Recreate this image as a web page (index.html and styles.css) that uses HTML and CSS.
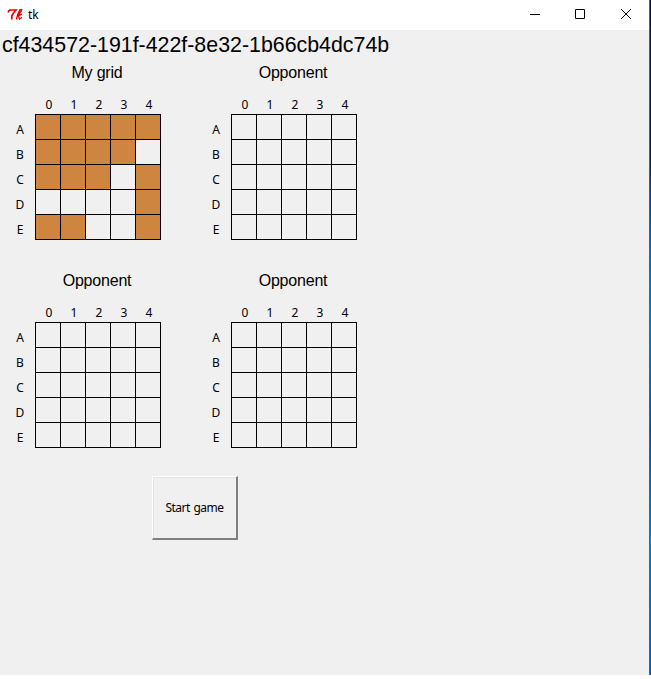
FILE: index.html
```html
<!DOCTYPE html>
<html lang="en">
<head>
<meta charset="utf-8">
<title>tk</title>
<link rel="stylesheet" href="styles.css">
</head>
<body>
<div class="desktop">
<main class="window">
  <header class="titlebar">
    <svg class="logo" width="16" height="16" viewBox="0 0 16 16" fill="none" stroke="#f00000"><path stroke-width="1.7" d="M1.5 5.5V4L3 3H9L6.5 6L4.8 9V12.5"/><path stroke-width="1.4" d="M9.5 12.5L10.5 8L13 2.8H14.5L14 4.5L10.5 9M14.8 6.8L11.5 8.8L12.5 12L15 10.5"/></svg>
    <span class="caption">tk</span>
    <div class="controls">
      <svg width="45" height="29" viewBox="0 0 45 29" stroke="#000" fill="none"><path d="M17 14.5h10"/></svg>
      <svg width="45" height="29" viewBox="0 0 45 29" stroke="#000" fill="none"><path d="M17.5 9.5h9v9h-9z"/></svg>
      <svg width="45" height="29" viewBox="0 0 45 29" stroke="#000" fill="none"><path d="M18 9l10 10M28 9l-10 10"/></svg>
    </div>
  </header>
  <h1 class="game-id">cf434572-191f-422f-8e32-1b66cb4dc74b</h1>
  <div class="boards" id="boards"></div>
  <button class="start">Start game</button>
</main>
<div class="edge"></div>
</div>
<script src="boards.js"></script>
</body>
</html>
```
FILE: boards.js
```js
const boards = [
  { name: 'My grid', cells: ['11111', '11110', '11101', '00001', '11001'] },
  { name: 'Opponent' },
  { name: 'Opponent' },
  { name: 'Opponent' }
];
const empty = Array(5).fill('00000');

document.getElementById('boards').innerHTML = boards.map(({ name, cells = empty }) => `
  <section class="board">
    <h2>${name}</h2>
    <div class="columns">${[0, 1, 2, 3, 4].map(n => `<span>${n}</span>`).join('')}</div>
    <div class="field">
      <div class="rows">${[...'ABCDE'].map(c => `<span>${c}</span>`).join('')}</div>
      <div class="cells">${cells.join('').split('').map(v => `<i class="${v === '1' ? 'ship' : 'sea'}"></i>`).join('')}</div>
    </div>
  </section>`).join('');
```
FILE: styles.css
```css
* { box-sizing: border-box; }
body {
  margin: 0;
  background: #fff;
  color: #000;
  font: 12px/16px "Noto Sans", sans-serif;
}
.desktop { display: flex; height: 675px; }
.window { width: 649px; background: #f0f0f0; }
.edge {
  width: 2px;
  border-left: 1px solid #0078d7;
  background: linear-gradient(#001a40 0, #002050 150px, #0070c8 260px, #0080d8 330px, #004e98 430px, #0080d8 540px, #0058b0 100%);
}
.titlebar {
  display: flex;
  align-items: center;
  height: 30px;
  padding: 0 1px 0 7px;
  background: #fff;
}
.logo { display: block; }
.caption { margin-left: 5px; }
.controls { display: flex; margin-left: auto; height: 30px; }
.game-id {
  margin: 0;
  padding: 2px 0 0 2px;
  height: 31px;
  font: 21.36px/26px "Liberation Sans", Arial, sans-serif;
}
.boards {
  display: grid;
  grid-template-columns: 196px 196px;
  grid-auto-rows: 208px;
}
.board { width: 196px; }
.board h2 {
  margin: 0;
  padding-right: 2px;
  height: 36px;
  text-align: center;
  font: 16px/23px "Liberation Sans", Arial, sans-serif;
  letter-spacing: -0.2px;
}
.columns { display: flex; padding-left: 36.5px; height: 17px; }
.columns span { width: 25px; text-align: center; }
.field { display: flex; }
.rows { width: 35px; padding: 3px 0 0 5px; text-align: center; line-height: 25px; }
.rows span { display: block; width: 30px; }
.cells {
  display: grid;
  grid-template-columns: repeat(5, 25px);
  grid-auto-rows: 25px;
  width: 126px;
  height: 126px;
  border: solid #000;
  border-width: 1px 0 0 1px;
}
.cells i { border: solid #000; border-width: 0 1px 1px 0; }
.ship { background: #cd853f; }
.start {
  display: block;
  width: 86px;
  height: 64px;
  margin: -1px 0 0 152px;
  padding: 0;
  border: solid;
  border-width: 1px 2px 2px 1px;
  border-color: #fff #808080 #808080 #fff;
  background: #f0f0f0;
  box-shadow: inset 1px 1px #e3e3e3;
  color: #000;
  font: inherit;
  letter-spacing: -0.5px;
  word-spacing: 1px;
}
```
